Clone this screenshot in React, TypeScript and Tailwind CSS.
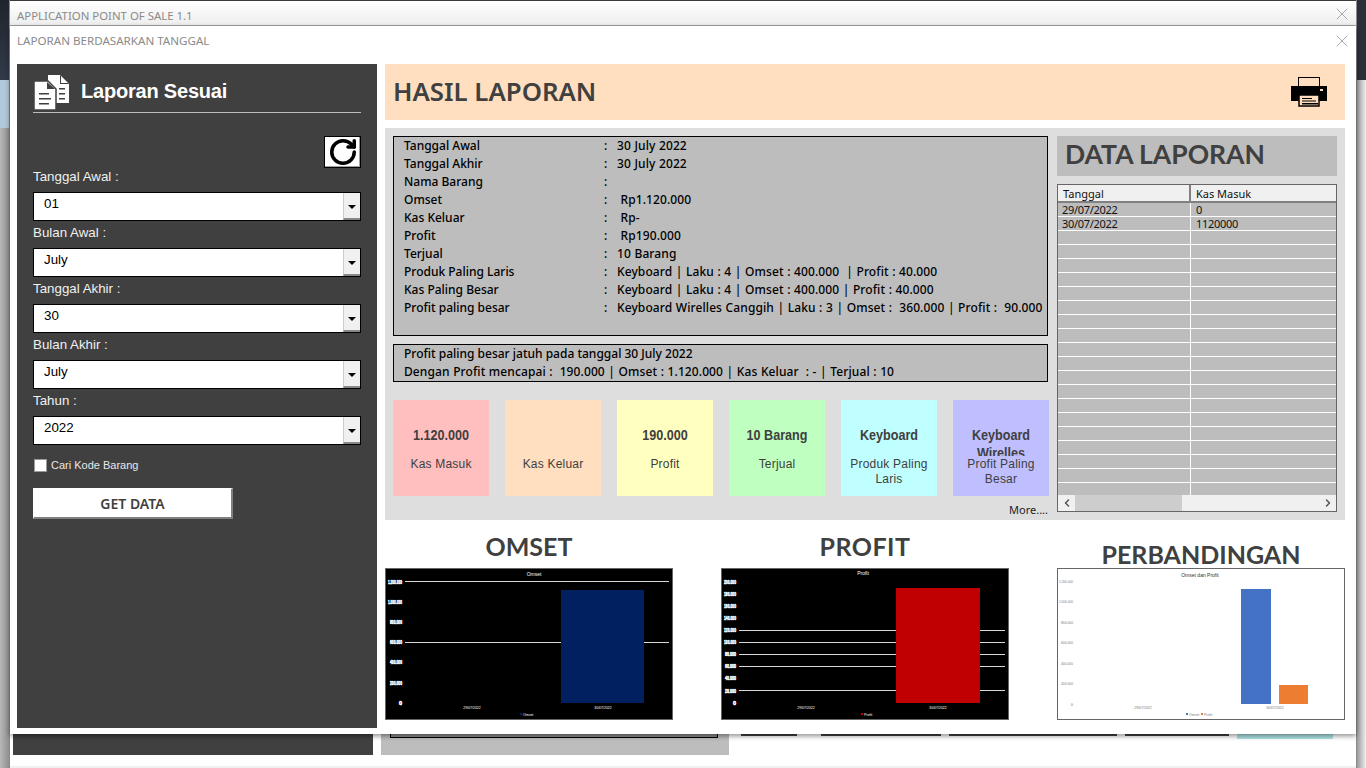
import { RotateCw, ChevronLeft, ChevronRight, X } from 'lucide-react';

const ui = "font-['Noto_Sans',sans-serif]";
const arial = "font-['Liberation_Sans',Arial,sans-serif]";

const fields = [
  { label: 'Tanggal Awal :', value: '01' },
  { label: 'Bulan Awal :', value: 'July' },
  { label: 'Tanggal Akhir :', value: '30' },
  { label: 'Bulan Akhir :', value: 'July' },
  { label: 'Tahun :', value: '2022' },
];

const reportRows = [
  ['Tanggal Awal', '30 July 2022'],
  ['Tanggal Akhir', '30 July 2022'],
  ['Nama Barang', ''],
  ['Omset', ' Rp1.120.000'],
  ['Kas Keluar', ' Rp-'],
  ['Profit', ' Rp190.000'],
  ['Terjual', '10 Barang'],
  ['Produk Paling Laris', 'Keyboard | Laku : 4 | Omset : 400.000  | Profit : 40.000'],
  ['Kas Paling Besar', 'Keyboard | Laku : 4 | Omset : 400.000 | Profit : 40.000'],
  ['Profit paling besar', 'Keyboard Wirelles Canggih | Laku : 3 | Omset :  360.000 | Profit :  90.000'],
];

const cards = [
  { title: '1.120.000', sub: 'Kas Masuk', bg: 'bg-[#ffbfbf]' },
  { title: '', sub: 'Kas Keluar', bg: 'bg-[#ffdfbf]' },
  { title: '190.000', sub: 'Profit', bg: 'bg-[#ffffbf]' },
  { title: '10 Barang', sub: 'Terjual', bg: 'bg-[#bfffbf]' },
  { title: 'Keyboard', sub: 'Produk Paling Laris', bg: 'bg-[#bfffff]' },
  { title: 'Keyboard Wirelles Canggih', sub: 'Profit Paling Besar', bg: 'bg-[#bfbfff]' },
];

const gridRows = [
  ['29/07/2022', '0'],
  ['30/07/2022', '1120000'],
  ...Array.from({ length: 19 }, () => ['', '']),
];

type Tick = { y: number; label: string };
type Bar = { x: number; y: number; w: number; h: number; fill: string };

type ChartProps = {
  title: string;
  titleX: number;
  titleY: number;
  legend: string;
  legendX: number;
  xLabels: [number, number];
  labelRight: number;
  ticks: Tick[];
  grid: number[];
  gridFrom: number;
  gridTo: number;
  bars: Bar[];
  dark: boolean;
};

// axis labels in the picture are squeezed into a few pixels
function tickWidth(label: string) {
  if (label.length >= 9) return 14;
  if (label.length >= 7) return 12;
  if (label.length >= 6) return 11;
  return undefined;
}

function Chart(c: ChartProps) {
  const ink = c.dark ? '#ffffff' : '#777777';
  return (
    <div className={`h-[152px] w-[288px] border border-[#666666] ${c.dark ? 'bg-black' : 'bg-white'}`}>
      <svg width="286" height="150" viewBox="1 1 286 150" className="block" fontFamily="Liberation Sans, sans-serif">
        <text x={c.titleX} y={c.titleY + 2} fontSize="5" fill={c.dark ? ink : '#333333'} textAnchor="middle">{c.title}</text>
        {c.grid.map(y => (
          <line key={y} x1={c.gridFrom} x2={c.gridTo} y1={y} y2={y} stroke="#d9d9d9" strokeWidth="1" />
        ))}
        {c.ticks.map(t => (
          <text
            key={t.y}
            x={c.labelRight}
            y={t.y + 2}
            fontSize={c.dark ? 5.5 : 4}
            fontWeight={c.dark ? 700 : 400}
            fill={ink}
            stroke={c.dark ? ink : 'none'}
            strokeWidth="0.5"
            textAnchor="end"
            textLength={tickWidth(t.label)}
            lengthAdjust="spacingAndGlyphs"
          >
            {t.label}
          </text>
        ))}
        {c.bars.map(b => (
          <rect key={b.x} x={b.x} y={b.y} width={b.w} height={b.h} fill={b.fill} />
        ))}
        <text x={c.xLabels[0]} y="141" fontSize="3.5" fill={ink} textAnchor="middle">29/07/2022</text>
        <text x={c.xLabels[1]} y="141" fontSize="3.5" fill={ink} textAnchor="middle">30/07/2022</text>
        <rect x={c.legendX - 8} y="145" width="2" height="2" fill={c.bars[0].fill} />
        <text x={c.legendX - 5} y="147.5" fontSize="3.5" fill={ink}>{c.legend}</text>
        {c.bars[1] && <rect x={c.legendX + 7} y="145" width="2" height="2" fill={c.bars[1].fill} />}
        {c.bars[1] && <text x={c.legendX + 10} y="147.5" fontSize="3.5" fill={ink}>Profit</text>}
      </svg>
    </div>
  );
}

function DocsIcon() {
  return (
    <svg width="36" height="36" viewBox="0 0 36 36" className="shrink-0">
      <path d="M14 0H26L35 9V28H14Z" fill="#fff" />
      <path d="M26 0V9H35Z" fill="#404040" />
      <path d="M27 1L34 8H27Z" fill="#fff" />
      <path d="M0 6H14L22 14V35H0Z" fill="#fff" stroke="#404040" strokeWidth="1.5" />
      <path d="M13 7V14H21Z" fill="#404040" />
      <path d="M5 18H15V19.5H5ZM5 23H17V24.5H5ZM5 28H15V29.5H5Z" fill="#404040" />
      <path d="M25 13H31V14.5H25ZM25 18H31V19.5H25ZM25 23H31V24.5H25Z" fill="#404040" />
    </svg>
  );
}

function PrinterIcon() {
  return (
    <svg width="36" height="30" viewBox="0 0 36 30">
      <rect x="7.5" y="0.5" width="21" height="10" fill="none" stroke="#000" />
      <rect x="0" y="9" width="36" height="15" fill="#000" />
      <rect x="29" y="12" width="3" height="2" fill="#ffdfbf" />
      <rect x="8" y="18" width="20" height="11" fill="#ffdfbf" stroke="#000" strokeWidth="1.5" />
      <rect x="11" y="21" width="10" height="1" fill="#000" />
      <rect x="11" y="23.5" width="14" height="1" fill="#000" />
      <rect x="11" y="26" width="16" height="1.5" fill="#000" />
    </svg>
  );
}

export default function App() {
  return (
    <div className={`flex h-[768px] w-[1366px] overflow-hidden bg-white ${arial}`}>
      {/* desktop behind, left edge */}
      <div className="flex w-[9px] shrink-0 flex-col">
        <div className="h-[80px] bg-gradient-to-b from-[#20242c] to-[#323a4a]" />
        <div className="h-[48px] bg-[#b0c8da]" />
        <div className="flex-1 bg-gradient-to-r from-[#b8b8b8] to-[#8f8f8f]" />
      </div>

      {/* main window */}
      <div className="flex w-[1348px] shrink-0 flex-col border-x border-[#8a8a8a] bg-white">
        <div className={`flex h-[26px] shrink-0 items-center justify-between border-b border-t border-b-[#a0a0a0] border-t-[#3a3a3a] bg-gradient-to-b from-white to-[#eeeeee] pl-[7px] pr-[4px] pt-[6px] text-[11.4px] text-[#8a8a8a] ${ui}`}>
          <span>APPLICATION POINT OF SALE 1.1</span>
          <X size={20} strokeWidth={1} className="mb-[4px] text-[#999999]" />
        </div>

        {/* report dialog */}
        <div className="relative z-10 flex h-[708px] shrink-0 flex-col bg-white shadow-[0_2px_5px_rgba(0,0,0,0.45)]">
          <div className={`flex h-[38px] shrink-0 items-center justify-between pb-[8px] pl-[7px] pr-[4px] text-[11.6px] text-[#8a8a8a] ${ui}`}>
            <span>LAPORAN BERDASARKAN TANGGAL</span>
            <X size={20} strokeWidth={1} className="text-[#999999]" />
          </div>

          <div className="flex gap-[8px] pl-[7px]">
            {/* filter panel */}
            <div className="h-[664px] w-[360px] shrink-0 bg-[#404040] px-[16px] pt-[9px] text-[#f0f0f0]">
              <div className="flex h-[40px] items-center gap-[11px] border-b border-[#bdbdbd] pl-px">
                <DocsIcon />
                <span className="pb-[4px] text-[20px] font-bold tracking-[-0.2px] text-white">Laporan Sesuai</span>
              </div>
              <div className="mt-[23px] flex justify-end">
                <button className="flex h-[32px] w-[37px] items-center justify-center border border-black bg-white shadow-[inset_-1px_-1px_0_#a0a0a0]">
                  <RotateCw size={30} strokeWidth={2.8} className="text-black" />
                </button>
              </div>
              {fields.map(f => (
                <div key={f.label} className="mb-[3px]">
                  <div className="h-[24px] text-[13.33px] leading-[18px]">{f.label}</div>
                  <div className="flex h-[29px] border border-black bg-white">
                    <span className="flex-1 pl-[10px] text-[13.33px] leading-[22px] text-black">{f.value}</span>
                    <span className="flex w-[17px] items-center justify-center border-b-2 border-l border-b-[#888888] border-l-[#cccccc] bg-[#f0f0f0]">
                      <span className="mt-[2px] h-0 w-0 border-x-[4px] border-t-[4px] border-x-transparent border-t-black" />
                    </span>
                  </div>
                </div>
              ))}
              <label className="mt-[14px] flex h-[13px] items-center gap-[4px] pl-px text-[11px] text-[#e8e8e8]">
                <span className="h-[13px] w-[13px] border border-[#999999] bg-white" />
                Cari Kode Barang
              </label>
              <button className={`mt-[16px] h-[31px] w-[200px] border border-white border-b-2 border-r-2 border-b-[#808080] border-r-[#808080] bg-white text-[14px] font-semibold text-[#404040] ${ui}`}>GET DATA</button>
            </div>

            {/* results */}
            <div className="w-[960px] shrink-0">
              <div className="flex h-[56px] items-center justify-between bg-[#ffdfbf] pl-[8px] pr-[18px]">
                <h1 className={`pb-[2px] text-[25.8px] font-semibold text-[#404040] ${ui}`}>HASIL LAPORAN</h1>
                <PrinterIcon />
              </div>

              <div className="mt-[8px] flex h-[392px] gap-[8px] bg-[#dedede] p-[8px]">
                <div className="w-[656px] shrink-0">
                  <div className={`h-[200px] w-[655px] border border-black bg-[#bdbdbd] pl-[10px] text-[12px] font-medium leading-[18px] text-black ${ui}`}>
                    {reportRows.map(([k, v]) => (
                      <div key={k} className="grid h-[18px] grid-cols-[200px_13px_1fr] whitespace-pre">
                        <span>{k}</span>
                        <span>:</span>
                        <span className="tracking-[0.1px] [word-spacing:0.3px]">{v}</span>
                      </div>
                    ))}
                  </div>
                  <div className={`mt-[8px] h-[38px] w-[655px] border border-black bg-[#bdbdbd] pl-[10px] text-[12px] font-medium leading-[18px] text-black whitespace-pre ${ui}`}>
                    <div>Profit paling besar jatuh pada tanggal 30 July 2022</div>
                    <div className="tracking-[0.1px] [word-spacing:0.3px]">Dengan Profit mencapai :  190.000 | Omset : 1.120.000 | Kas Keluar  : - | Terjual : 10</div>
                  </div>
                  <div className="mt-[18px] flex gap-[16px]">
                    {cards.map(c => (
                      <div key={c.sub} className={`h-[96px] w-[96px] px-[6px] pt-[26px] text-center text-[#404040] ${c.bg}`}>
                        <div className="mb-px h-[30px] scale-x-[0.9] overflow-hidden text-[14px] font-bold leading-[18px]">{c.title}</div>
                        <div className="text-[12px] leading-[15px] tracking-[0.2px]">{c.sub}</div>
                      </div>
                    ))}
                  </div>
                  <div className={`mt-[5px] pr-[1px] text-right text-[11px] leading-[18px] text-[#222222] ${ui}`}>More....</div>
                </div>

                <div className="w-[280px] shrink-0">
                  <div className="flex h-[40px] items-center bg-[#bdbdbd] pl-[8px]">
                    <h2 className="pb-[3px] font-['Lato',sans-serif] text-[26.5px] font-bold text-[#404040]">DATA LAPORAN</h2>
                  </div>
                  <div className={`mt-[8px] flex h-[328px] flex-col border border-[#666666] bg-[#bdbdbd] text-[11px] text-[#111111] ${ui}`}>
                    <div className="flex h-[18px] shrink-0 border-b-2 border-[#808080] bg-[#f0f0f0] leading-[17px]">
                      <div className="w-[133px] border-r-2 border-[#808080] pl-[5px]">Tanggal</div>
                      <div className="flex-1 pl-[5px]">Kas Masuk</div>
                    </div>
                    <div className="flex-1 overflow-hidden tracking-[-0.3px]">
                      {gridRows.map((r, i) => (
                        <div key={i} className="flex h-[14px] border-b border-white leading-[13px]">
                          <div className="w-[133px] border-r border-white pl-[4px]">{r[0]}</div>
                          <div className="flex-1 pl-[5px]">{r[1]}</div>
                        </div>
                      ))}
                    </div>
                    <div className="flex h-[16px] shrink-0 items-center bg-[#f0f0f0] text-[#555555]">
                      <span className="flex w-[17px] justify-center"><ChevronLeft size={12} strokeWidth={3} /></span>
                      <span className="h-full w-[107px] bg-[#cdcdcd]" />
                      <span className="flex-1" />
                      <span className="flex w-[17px] justify-center"><ChevronRight size={12} strokeWidth={3} /></span>
                    </div>
                  </div>
                </div>
              </div>

              {/* charts */}
              <div className="flex h-[200px] items-end gap-[48px]">
                <div className="flex w-[288px] flex-col items-center">
                  <h3 className="mb-[9px] font-['Lato',sans-serif] text-[25px] font-bold leading-[26px] text-[#404040]">OMSET</h3>
                  <Chart
                    title="Omset" titleX={149} titleY={6} legend="Omset" legendX={143} xLabels={[87, 218]} labelRight={17}
                    ticks={[
                      { y: 13.5, label: '1.200.000' }, { y: 34, label: '1.000.000' }, { y: 54, label: '800.000' },
                      { y: 74, label: '600.000' }, { y: 94, label: '400.000' }, { y: 114.5, label: '200.000' }, { y: 135, label: '0' },
                    ]}
                    grid={[13.5, 74.5]} gridFrom={20} gridTo={284}
                    bars={[{ x: 176, y: 22, w: 83, h: 113, fill: '#002060' }]}
                    dark
                  />
                </div>
                <div className="flex w-[288px] flex-col items-center">
                  <h3 className="mb-[9px] font-['Lato',sans-serif] text-[25px] font-bold leading-[26px] tracking-[0.5px] text-[#404040]">PROFIT</h3>
                  <Chart
                    title="Profit" titleX={142} titleY={5} legend="Profit" legendX={148} xLabels={[85, 217]} labelRight={15}
                    ticks={[
                      { y: 14, label: '200.000' }, { y: 26, label: '180.000' }, { y: 38, label: '160.000' }, { y: 50, label: '140.000' },
                      { y: 62, label: '120.000' }, { y: 74, label: '100.000' }, { y: 86, label: '80.000' }, { y: 98, label: '60.000' },
                      { y: 110, label: '40.000' }, { y: 122.5, label: '20.000' }, { y: 134.5, label: '0' },
                    ]}
                    grid={[62.5, 74.5, 86.5, 98.5, 122.5]} gridFrom={18} gridTo={284}
                    bars={[{ x: 175, y: 20, w: 84, h: 115, fill: '#c00000' }]}
                    dark
                  />
                </div>
                <div className="flex w-[288px] flex-col items-center">
                  <h3 className="mb-px font-['Lato',sans-serif] text-[25px] font-bold leading-[25px] text-[#404040]">PERBANDINGAN</h3>
                  <Chart
                    title="Omset dan Profit" titleX={143} titleY={7} legend="Omset" legendX={137} xLabels={[86, 218]} labelRight={16}
                    ticks={[
                      { y: 13, label: '1.200.000' }, { y: 33, label: '1.000.000' }, { y: 54, label: '800.000' },
                      { y: 74, label: '600.000' }, { y: 95, label: '400.000' }, { y: 115, label: '200.000' }, { y: 136, label: '0' },
                    ]}
                    grid={[]} gridFrom={0} gridTo={0}
                    bars={[
                      { x: 184, y: 21, w: 30, h: 115, fill: '#4472c4' },
                      { x: 222, y: 117, w: 29, h: 19, fill: '#ed7d31' },
                    ]}
                    dark={false}
                  />
                </div>
              </div>
            </div>
          </div>
        </div>

        {/* underlying sales form peeking below the dialog */}
        <div className="flex flex-1 flex-col">
          <div className="flex h-[32px] shrink-0 items-start pl-[3px]">
            <div className="h-[21px] w-[360px] shrink-0 bg-[#404040]" />
            <div className="ml-[8px] h-[21px] w-[348px] shrink-0 bg-[#bdbdbd] pl-[9px]">
              <div className="h-[4px] w-[328px] border-x border-b border-black bg-[#8a8a8a]" />
            </div>
            <div className="ml-[12px] h-[2px] w-[56px] shrink-0 bg-[#404040]" />
            <div className="ml-[24px] h-[2px] w-[120px] shrink-0 bg-[#404040]" />
            <div className="ml-[8px] h-[2px] w-[168px] shrink-0 bg-[#404040]" />
            <div className="ml-[8px] h-[2px] w-[104px] shrink-0 bg-[#404040]" />
            <div className="ml-[8px] h-[5px] w-[96px] shrink-0 bg-[#aee4e4]" />
          </div>
          <div className="flex-1 bg-[#f0f0f0]" />
        </div>
      </div>

      {/* desktop behind, right edge */}
      <div className="flex flex-1 flex-col">
        <div className="h-[80px] bg-[#2a2f38]" />
        <div className="flex-1 bg-gradient-to-r from-[#9a9a9a] to-[#f0f0f0]" />
      </div>
    </div>
  );
}
